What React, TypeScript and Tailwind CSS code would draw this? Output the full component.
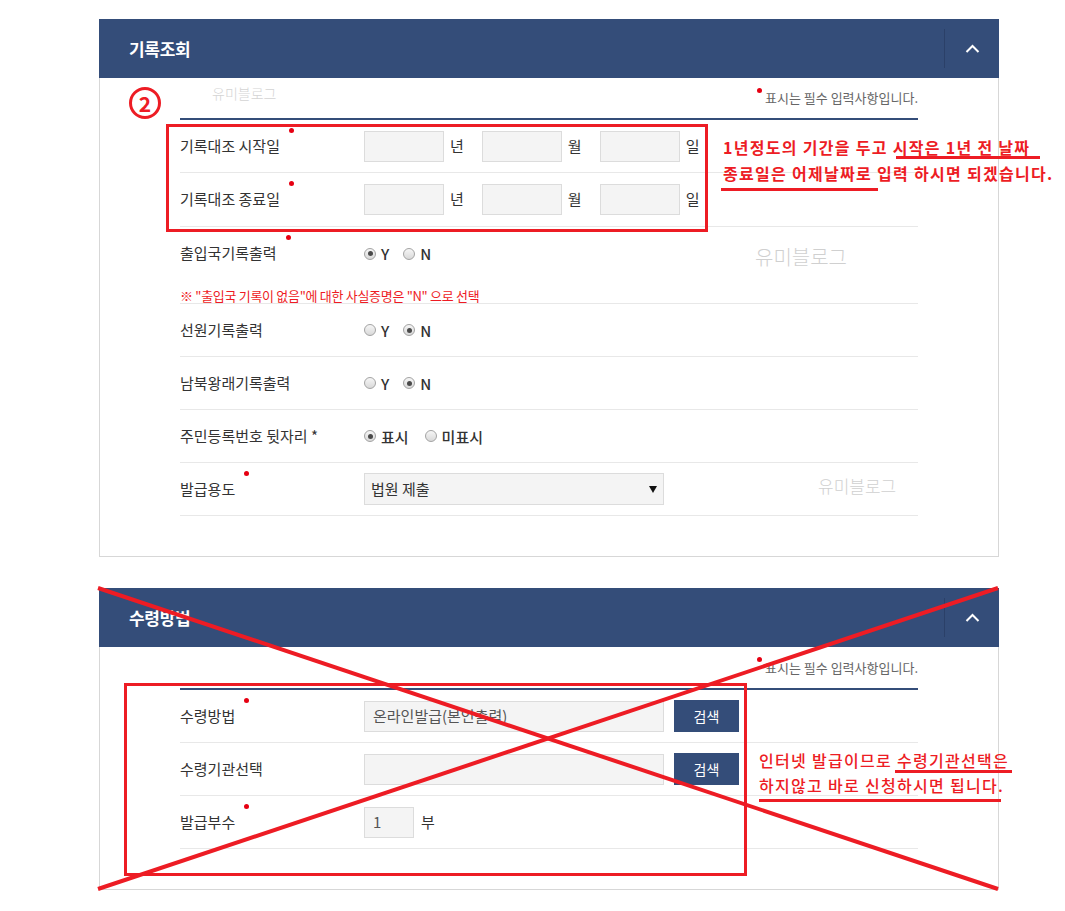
import React from "react";

const NAVY = "bg-[#344d79]";

function Dot({ top = "-top-[7px]" }: { top?: string }) {
  return (
    <span
      className={`absolute -right-[14px] ${top} h-[5px] w-[5px] rounded-full bg-[#e60012]`}
    />
  );
}

function Label({ text, dot = true }: { text: string; dot?: boolean }) {
  return (
    <div className="w-[184px] shrink-0 text-[15px] text-[#333]">
      <span className="relative">
        {text}
        {dot && <Dot />}
      </span>
    </div>
  );
}

function Radio({ checked, label, mr = "mr-[14px]" }: { checked?: boolean; label: string; mr?: string }) {
  return (
    <span className={`flex items-center ${mr}`}>
      <span className="flex h-[12px] w-[12px] items-center justify-center rounded-full border border-[#a3a3a3] bg-gradient-to-b from-[#f6f6f6] to-[#d9d9d9]">
        {checked && <span className="h-[5px] w-[5px] rounded-full bg-[#4a4a4a]" />}
      </span>
      <span className="ml-[5px] text-[15px] font-medium leading-none text-[#333]">{label}</span>
    </span>
  );
}

function Box({ w = "w-[80px]", children }: { w?: string; children?: React.ReactNode }) {
  return (
    <div
      className={`flex h-[31px] ${w} items-center border border-[#dcdcdc] bg-[#f4f4f4] px-[8px] text-[15px] text-[#555]`}
    >
      {children}
    </div>
  );
}

function Row({ children, h = "h-[53px]" }: { children: React.ReactNode; h?: string }) {
  return <div className={`flex ${h} items-center border-b border-[#e8e8e8]`}>{children}</div>;
}

function DateRow({ label, h }: { label: string; h?: string }) {
  return (
    <Row h={h}>
      <Label text={label} />
      <div className="flex items-center text-[15px] text-[#333]">
        <Box />
        <span className="ml-[6px] mr-[18px]">년</span>
        <Box />
        <span className="ml-[6px] mr-[18px]">월</span>
        <Box />
        <span className="ml-[6px]">일</span>
      </div>
    </Row>
  );
}

function Panel({ title, children, note = "h-[40px]" }: { title: string; children: React.ReactNode; note?: string }) {
  return (
    <section className="w-[900px]">
      <div className={`flex h-[59px] items-center ${NAVY}`}>
        <h2 className="flex-1 pl-[30px] text-[17px] font-bold tracking-[-0.3px] text-white">{title}</h2>
        <div className="flex h-[39px] w-[55px] items-center justify-center border-l border-[#2b4068]">
          <svg width="15" height="9" viewBox="0 0 15 9">
            <polyline points="1.5,8 7.5,2 13.5,8" fill="none" stroke="#fff" strokeWidth="2" />
          </svg>
        </div>
      </div>
      <div className="border-x border-b border-[#d7d7d7] px-[80px] pb-[40px]">
        <div className={`flex ${note} items-center justify-end text-[13px] text-[#666]`}>
          <span className="mb-[16px] mr-[3px] h-[5px] w-[5px] rounded-full bg-[#e60012]" />
          표시는 필수 입력사항입니다.
        </div>
        <div className={`h-[2px] ${NAVY}`} />
        {children}
      </div>
    </section>
  );
}

export default function App() {
  return (
    <div className="relative h-[911px] w-[1065px] overflow-hidden bg-white font-['Noto_Sans_CJK_KR','Noto_Sans',sans-serif]">
      <div className="flex flex-col gap-[31px] pl-[99px] pt-[19px]">
        <Panel title="기록조회">
          <DateRow label="기록대조 시작일" />
          <DateRow label="기록대조 종료일" h="h-[54px]" />
          <div className="flex h-[77px] flex-col border-b border-[#e8e8e8]">
            <div className="flex h-[53px] shrink-0 items-center">
              <Label text="출입국기록출력" />
              <Radio checked label="Y" />
              <Radio label="N" />
            </div>
            <div className="mt-[8px] text-[13px] leading-[16px] tracking-[-0.3px] text-[#ee1b24]">
              ※ "출입국 기록이 없음"에 대한 사실증명은 "N" 으로 선택
            </div>
          </div>
          <Row>
            <Label text="선원기록출력" dot={false} />
            <Radio label="Y" />
            <Radio checked label="N" />
          </Row>
          <Row>
            <Label text="남북왕래기록출력" dot={false} />
            <Radio label="Y" />
            <Radio checked label="N" />
          </Row>
          <Row>
            <Label text="주민등록번호 뒷자리 *" dot={false} />
            <Radio checked label="표시" mr="mr-[16px]" />
            <Radio label="미표시" />
          </Row>
          <Row>
            <Label text="발급용도" />
            <div className="flex h-[32px] w-[300px] items-center justify-between border border-[#dcdcdc] bg-[#f4f4f4] pl-[6px] pr-[6px] text-[15px] text-[#333]">
              <span>법원 제출</span>
              <svg width="8" height="7" viewBox="0 0 8 7">
                <polygon points="0,0 8,0 4,7" fill="#111" />
              </svg>
            </div>
          </Row>
        </Panel>

        <Panel title="수령방법" note="h-[41px]">
          <Row>
            <Label text="수령방법" />
            <Box w="w-[300px]">온라인발급(본인출력)</Box>
            <button className={`ml-[10px] h-[32px] w-[65px] ${NAVY} text-[14px] text-white`}>검색</button>
          </Row>
          <Row>
            <Label text="수령기관선택" dot={false} />
            <Box w="w-[300px]" />
            <button className={`ml-[10px] h-[32px] w-[65px] ${NAVY} text-[14px] text-white`}>검색</button>
          </Row>
          <Row>
            <Label text="발급부수" />
            <Box w="w-[50px]">1</Box>
            <span className="ml-[7px] text-[15px] text-[#333]">부</span>
          </Row>
        </Panel>
      </div>

      {/* watermarks */}
      <div className="pointer-events-none absolute left-[212px] top-[83px] text-[14px] font-light text-[#d4d4d4]">유미블로그</div>
      <div className="pointer-events-none absolute left-[755px] top-[242px] text-[20px] font-light text-[#d0d0d0]">유미블로그</div>
      <div className="pointer-events-none absolute left-[818px] top-[473px] text-[17px] font-light text-[#d0d0d0]">유미블로그</div>

      {/* annotation 1 */}
      <div className="absolute left-[129px] top-[87px] flex h-[32px] w-[32px] items-center justify-center rounded-full border-[3px] border-[#ed1c24] text-[21px] font-bold leading-none text-[#ed1c24]">
        2
      </div>
      <div className="absolute left-[166px] top-[124px] h-[108px] w-[542px] border-[3px] border-[#ed1c24]" />
      <div className="absolute left-[723px] top-[134px] whitespace-nowrap text-[16px] font-bold leading-[26px] tracking-[1.3px] text-[#ed1c24]">
        <div>1년정도의 기간을 두고 시작은 1년 전 날짜</div>
        <div>종료일은 어제날짜로 입력 하시면 되겠습니다.</div>
      </div>
      <div className="absolute left-[896px] top-[156px] h-[3px] w-[144px] bg-[#ed1c24]" />
      <div className="absolute left-[721px] top-[188px] h-[3px] w-[157px] bg-[#ed1c24]" />

      {/* annotation 2 */}
      <div className="absolute left-[124px] top-[683px] h-[193px] w-[623px] border-[3px] border-[#ed1c24]" />
      <svg className="pointer-events-none absolute left-0 top-0" width="1065" height="911">
        <line x1="98" y1="588" x2="998" y2="889" stroke="#ed1c24" strokeWidth="4" />
        <line x1="998" y1="588" x2="98" y2="889" stroke="#ed1c24" strokeWidth="4" />
      </svg>
      <div className="absolute left-[759px] top-[748px] whitespace-nowrap text-[16px] font-medium leading-[25px] tracking-[1.3px] text-[#ed1c24]">
        <div>인터넷 발급이므로 수령기관선택은</div>
        <div>하지않고 바로 신청하시면 됩니다.</div>
      </div>
      <div className="absolute left-[895px] top-[770px] h-[3px] w-[117px] bg-[#ed1c24]" />
      <div className="absolute left-[759px] top-[799px] h-[3px] w-[242px] bg-[#ed1c24]" />
    </div>
  );
}
